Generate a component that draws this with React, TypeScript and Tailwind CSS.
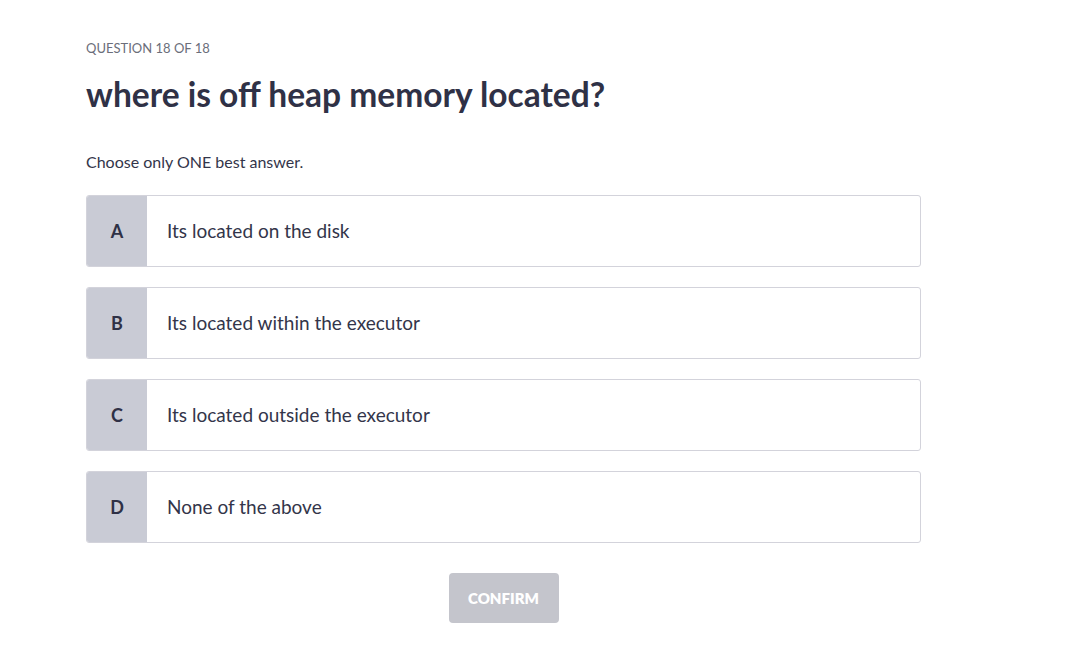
import React from "react";

const options = [
  { letter: "A", text: "Its located on the disk" },
  { letter: "B", text: "Its located within the executor" },
  { letter: "C", text: "Its located outside the executor" },
  { letter: "D", text: "None of the above" },
];

const App: React.FC = () => {
  return (
    <div
      className="min-h-screen bg-white"
      style={{ fontFamily: '"Source Sans Pro", Lato, "Noto Sans", sans-serif' }}
    >
      <div className="flex flex-col pl-[86px] pt-[40px] w-[921px]">
        <p className="text-[13px] leading-4 text-[#6b6e7a] uppercase">Question 18 of 18</p>
        <h1 className="mt-[18px] text-[33.5px] leading-10 font-bold text-[#2f3146]">
          where is off heap memory located?
        </h1>
        <p className="mt-[38px] text-[16px] leading-5 text-[#33354a]">Choose only ONE best answer.</p>
        <div className="flex flex-col gap-[20px] mt-[23px]">
          {options.map((o) => (
            <div
              key={o.letter}
              className="flex h-[72px] border border-[#d3d3db] rounded-[3px] overflow-hidden bg-white"
            >
              <div className="flex items-center justify-center w-[60px] bg-[#c9cbd5] text-[18px] font-bold text-[#2f3146]">
                {o.letter}
              </div>
              <div className="flex items-center pl-[20px] text-[19px] text-[#33354a]">{o.text}</div>
            </div>
          ))}
        </div>
        <button className="self-center mt-[30px] w-[110px] h-[50px] rounded-[4px] bg-[#c4c5cc] text-white text-[15px] font-extrabold uppercase">
          Confirm
        </button>
      </div>
    </div>
  );
};

export default App;
